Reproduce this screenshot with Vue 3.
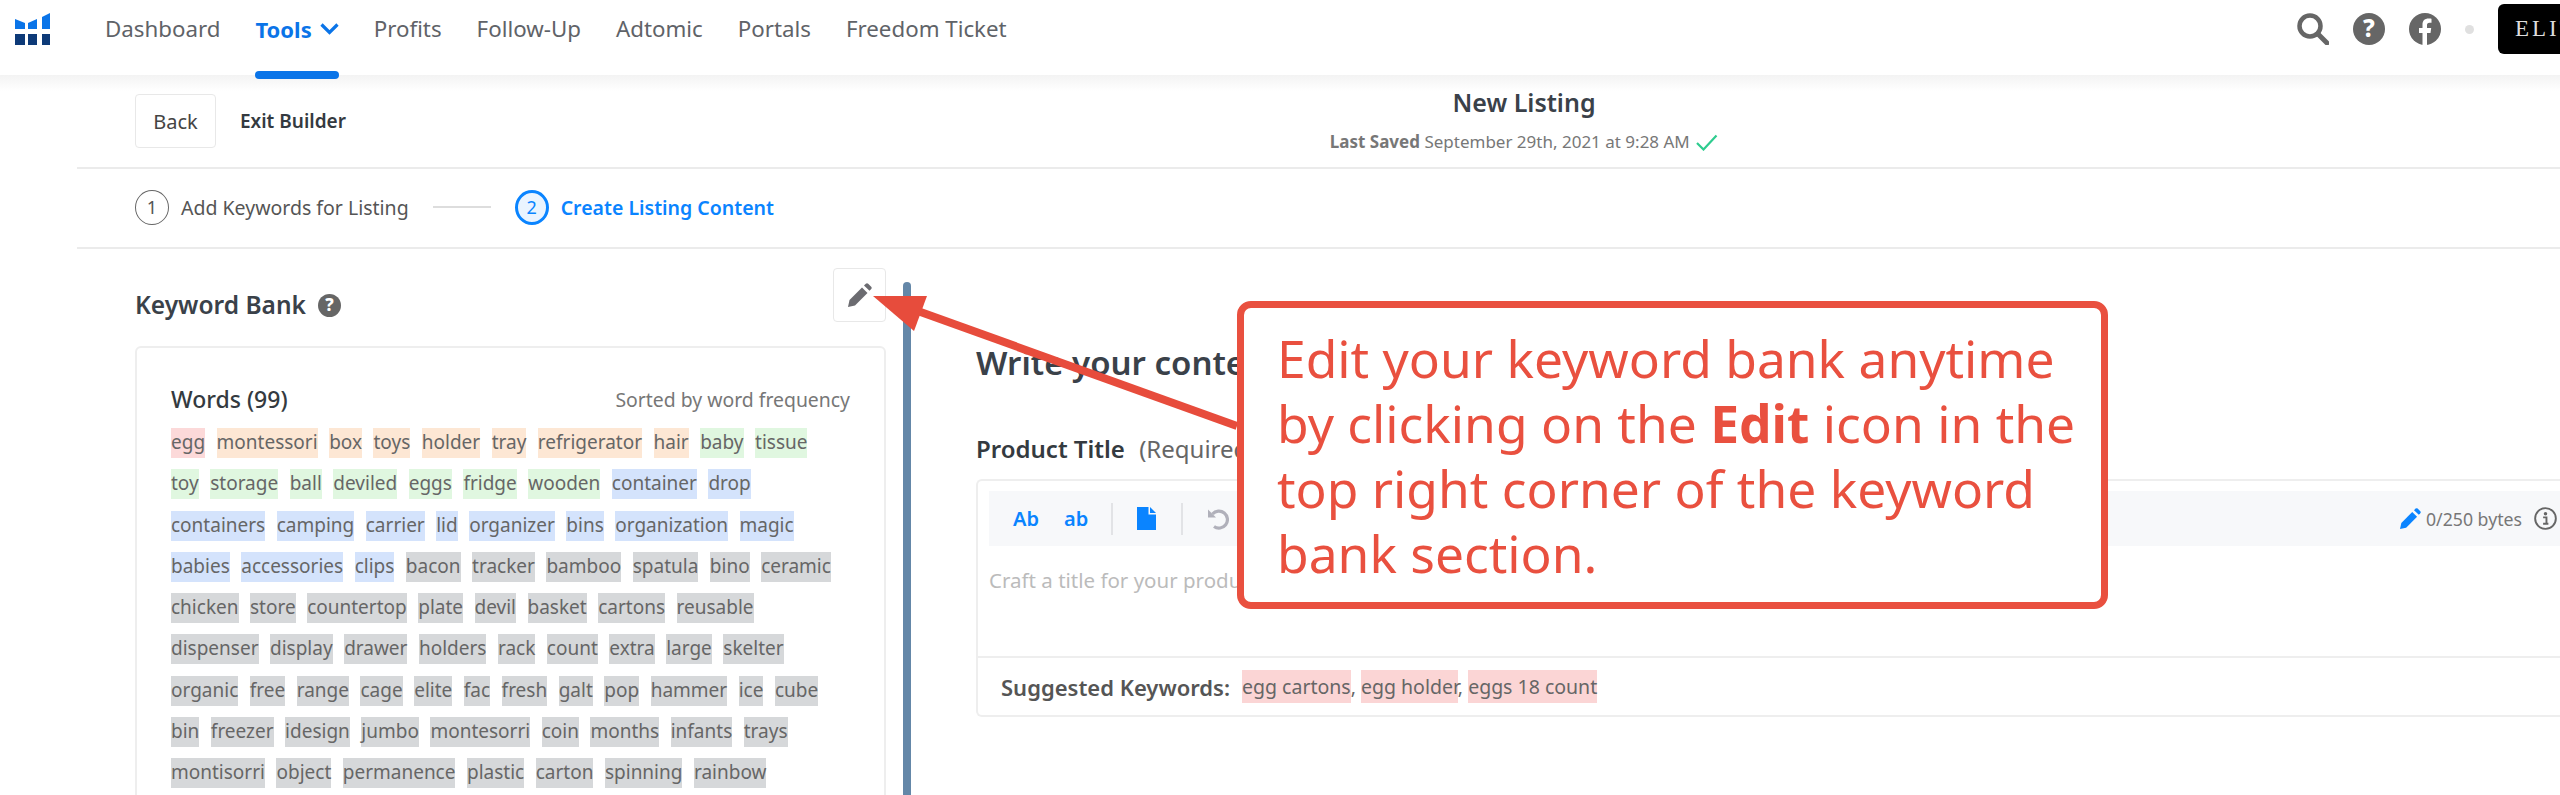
<script setup>
const navItems = ['Profits', 'Follow-Up', 'Adtomic', 'Portals', 'Freedom Ticket']
const rows = [
  [['egg','r'],['montessori','o'],['box','o'],['toys','o'],['holder','o'],['tray','o'],['refrigerator','o'],['hair','o'],['baby','g'],['tissue','g']],
  [['toy','g'],['storage','g'],['ball','g'],['deviled','g'],['eggs','g'],['fridge','g'],['wooden','g'],['container','b'],['drop','b']],
  [['containers','b'],['camping','b'],['carrier','b'],['lid','b'],['organizer','b'],['bins','b'],['organization','b'],['magic','b']],
  [['babies','b'],['accessories','b'],['clips','b'],['bacon','k'],['tracker','k'],['bamboo','k'],['spatula','k'],['bino','k'],['ceramic','k']],
  'chicken store countertop plate devil basket cartons reusable'.split(' ').map(w => [w,'k']),
  'dispenser display drawer holders rack count extra large skelter'.split(' ').map(w => [w,'k']),
  'organic free range cage elite fac fresh galt pop hammer ice cube'.split(' ').map(w => [w,'k']),
  'bin freezer idesign jumbo montesorri coin months infants trays'.split(' ').map(w => [w,'k']),
  'montisorri object permanence plastic carton spinning rainbow'.split(' ').map(w => [w,'k'])
]
</script>

<template>
  <div class="page">
    <header class="nav">
      <svg class="logo" width="35" height="32" viewBox="0 0 35 32">
        <path d="M0 6l10 4v6H0z" fill="#0a74e8"/><path d="M13 10l9-4v10h-9z" fill="#0a74e8"/><path d="M27 4l8-4v16h-8z" fill="#0a74e8"/>
        <rect y="21" width="10" height="11" fill="#0d3a78"/><rect x="13" y="21" width="9" height="11" fill="#0d3a78"/><rect x="27" y="21" width="8" height="11" fill="#0d3a78"/>
      </svg>
      <a class="nav-link">Dashboard</a>
      <a class="nav-link active">Tools
        <svg width="19" height="12" viewBox="0 0 19 12"><path d="M1.500 1.500l8 8 8-8" fill="none" stroke="#0a74e8" stroke-width="3.200"/></svg>
      </a>
      <a v-for="n in navItems" :key="n" class="nav-link">{{ n }}</a>
      <div class="nav-right">
        <svg width="32" height="32" viewBox="0 0 32 32"><circle cx="13" cy="13" r="10.500" fill="none" stroke="#666" stroke-width="4.500"/><path d="M21 21l9 9" stroke="#666" stroke-width="5" stroke-linecap="round"/></svg>
        <svg width="32" height="32" viewBox="0 0 32 32"><circle cx="16" cy="16" r="16" fill="#666"/><text x="16" y="24" text-anchor="middle" class="qm">?</text></svg>
        <svg width="32" height="32" viewBox="0 0 32 32"><circle cx="16" cy="16" r="16" fill="#666"/><path d="M13.500 32V20H10v-5h3.500v-3.500c0-4 2.400-6 6-6 1.600 0 3 .2 3 .2v4h-2c-2 0-2.500 1.200-2.500 2.400V15h4.200l-.7 5h-3.500v12z" fill="#fff"/></svg>
        <span class="dot"></span>
        <div class="elite">ELITE</div>
      </div>
    </header>

    <main class="content">
      <section class="head-row">
        <div class="head-left">
          <button class="back">Back</button>
          <span class="exit">Exit Builder</span>
        </div>
        <div class="head-center">
          <div class="title">New Listing</div>
          <div class="saved"><b>Last Saved</b> September 29th, 2021 at 9:28 AM
            <svg width="22" height="17" viewBox="0 0 22 17"><path d="M1 9l6.500 6.500L20.500 1.500" fill="none" stroke="#2ecc8f" stroke-width="2.200"/></svg>
          </div>
        </div>
      </section>

      <section class="steps">
        <span class="num">1</span>
        <span class="step">Add Keywords for Listing</span>
        <span class="connector"></span>
        <span class="num on">2</span>
        <span class="step on">Create Listing Content</span>
      </section>

      <section class="body">
        <aside class="bank">
          <div class="bank-head">
            <h2>Keyword Bank
              <svg width="23" height="23" viewBox="0 0 32 32"><circle cx="16" cy="16" r="16" fill="#666"/><text x="16" y="24" text-anchor="middle" class="qm">?</text></svg>
            </h2>
            <button class="edit">
              <svg width="24" height="24" viewBox="0 0 24 24"><path d="M0 24l1.500-7L14 4.500l5.500 5.500L7 22.500z" fill="#6b6b70"/><path d="M16 2.500l1.800-1.800q1.200-1 2.400 0l3 3q1 1.200 0 2.400L21.500 7.800z" fill="#6b6b70"/></svg>
            </button>
          </div>
          <div class="card">
            <div class="card-head"><strong>Words (99)</strong><span>Sorted by word frequency</span></div>
            <div v-for="(r, i) in rows" :key="i" class="row">
              <span v-for="w in r" :key="w[0]" class="chip" :class="w[1]">{{ w[0] }}</span>
            </div>
          </div>
        </aside>

        <div class="rail"></div>

        <div class="writer">
          <h1>Write your content</h1>
          <div class="label"><b>Product Title</b> <span>(Required)</span></div>
          <div class="editor">
            <div class="toolbar">
              <span class="tb first">Ab</span><span class="tb second">ab</span>
              <i class="sep"></i>
              <svg width="19" height="23" viewBox="0 0 19 23"><path d="M0 0h11.500v7.500H19V23H0z" fill="#0a84ff"/><path d="M13 0l6 6h-6z" fill="#0a84ff"/></svg>
              <i class="sep"></i>
              <svg width="22" height="22" viewBox="0 0 22 22"><path d="M5.500 6A8.500 8.500 0 1 1 7 18.500" fill="none" stroke="#b0b0ba" stroke-width="3.200"/><path d="M1 1.500v8h8z" fill="#b0b0ba"/></svg>
              <div class="bytes">
                <svg width="21" height="21" viewBox="0 0 24 24"><path d="M0 24l1.500-7L14 4.500l5.500 5.500L7 22.500z" fill="#0a84ff"/><path d="M16 2.500l1.800-1.800q1.200-1 2.400 0l3 3q1 1.200 0 2.400L21.500 7.800z" fill="#0a84ff"/></svg>
                <span>0/250 bytes</span>
                <svg width="23" height="23" viewBox="0 0 24 24"><circle cx="12" cy="12" r="10.800" fill="none" stroke="#666" stroke-width="2"/><circle cx="12" cy="7" r="1.800" fill="#666"/><path d="M9.500 10.800H13V17M9.500 17.500h5.500" fill="none" stroke="#666" stroke-width="2"/></svg>
              </div>
            </div>
            <div class="placeholder">Craft a title for your product</div>
            <div class="suggest">
              <b>Suggested Keywords:</b>
              <span class="sk"><mark>egg cartons</mark>, <mark>egg holder</mark>, <mark>eggs 18 count</mark></span>
            </div>
          </div>
        </div>
      </section>
    </main>

    <svg class="arrow" width="380" height="160" viewBox="0 0 380 160">
      <path d="M50 28L372 144" stroke="#e74c3c" stroke-width="8" fill="none"/>
      <path d="M8 14H62L49 49z" fill="#e74c3c"/>
    </svg>
    <div class="callout">Edit your keyword bank anytime by clicking on the <b>Edit</b> icon in the top right corner of the keyword bank section.</div>
  </div>
</template>

<style>
html, body { margin: 0; background: #fff; overflow: hidden; }
</style>

<style scoped>
.page { position: relative; width: 2560px; height: 795px; overflow: hidden; font-family: "Noto Sans", sans-serif; color: #343a40; background: #fff; }
.nav { height: 75px; display: flex; align-items: center; padding: 0 0 17px 15px; box-sizing: border-box; background: #fff; position: relative; z-index: 1; }
.nav::after { content: ""; position: absolute; left: 0; right: 0; top: 75px; height: 16px; background: linear-gradient(#f3f3f3, #fff); }
.logo { margin-right: 55px; }
.nav-link { font-size: 22.300px; line-height: 30px; color: #5f6368; margin-right: 35px; position: relative; white-space: nowrap; }
.nav-link.active { color: #0a74e8; font-weight: 700; font-size: 22px; display: inline-flex; align-items: center; gap: 8px; }
.nav-link.active::after { content: ""; position: absolute; left: 0; right: 0; top: 57px; height: 8px; border-radius: 4px; background: #0a74e8; z-index: 2; }
.nav-right { margin-left: auto; display: flex; align-items: center; gap: 24px; }
.qm { font: 800 24px "Noto Sans", sans-serif; fill: #fff; }
.dot { width: 9px; height: 9px; border-radius: 50%; background: #e0e0e0; }
.elite { width: 62px; height: 50px; box-sizing: border-box; background: #000; color: #ddd; border-radius: 6px 0 0 6px; font: 23px/50px "Liberation Serif", serif; letter-spacing: 3px; padding-left: 17px; overflow: hidden; white-space: nowrap; }
.content { margin-left: 77px; position: relative; }
.head-row { height: 94px; box-sizing: border-box; padding: 19px 0 0 58px; border-bottom: 2px solid #ebebeb; position: relative; display: flex; }
.head-left { display: flex; align-items: center; height: 54px; gap: 24px; }
.back { width: 81px; height: 54px; background: #fff; border: 1px solid #e8e8e8; border-radius: 4px; font: 20px "Noto Sans", sans-serif; color: #444; padding: 0; }
.exit { font-size: 19px; font-weight: 600; color: #343a40; }
.head-center { position: absolute; left: 1222px; top: 0; width: 450px; text-align: center; }
.title { font-size: 25px; font-weight: 600; margin-top: 9px; line-height: 36px; color: #3a4149; }
.saved { font-size: 17px; color: #777; margin-top: 10px; white-space: nowrap; }
.saved svg { vertical-align: -3px; margin-left: 2px; }
.steps { height: 80px; box-sizing: border-box; padding: 0 0 2px 58px; border-bottom: 2px solid #ebebeb; display: flex; align-items: center; font-size: 19.500px; }
.num { width: 34px; height: 35px; box-sizing: border-box; border: 1.500px solid #666; border-radius: 50%; display: flex; align-items: center; justify-content: center; font-size: 18px; color: #555; }
.num.on { border: 3px solid #0a84ff; background: #eaf4ff; color: #0a84ff; }
.step { margin-left: 12px; color: #555; }
.step.on { color: #0a84ff; font-weight: 600; }
.connector { width: 58px; height: 2px; background: #ddd; margin: 0 24px; }
.body { display: flex; }
.bank { width: 751px; margin-left: 58px; flex: none; }
.bank-head { height: 97px; display: flex; justify-content: space-between; align-items: flex-start; padding-top: 19px; box-sizing: border-box; }
h2 { font-size: 24.500px; font-weight: 600; margin: 20px 0 0; display: flex; align-items: center; gap: 12px; line-height: 34px; color: #3a4149; }
.edit { width: 53px; height: 54px; border: 1px solid #e8e8e8; border-radius: 4px; background: #fff; padding: 0; display: flex; align-items: center; justify-content: center; }
.card { border: 2px solid #eee; border-radius: 6px; padding: 36px 34px 0; height: 500px; box-sizing: border-box; }
.card-head { display: flex; justify-content: space-between; align-items: center; height: 30px; margin-bottom: 14px; }
.card-head strong { font-size: 23px; font-weight: 500; }
.card-head span { font-size: 19.400px; color: #777; }
.row { display: flex; gap: 11.500px; height: 41.300px; }
.chip { height: 30px; line-height: 29px; font-size: 19px; color: #666; white-space: nowrap; }
.r { background: #fcd9d9; } .o { background: #fde7d4; } .g { background: #e0f7e0; } .b { background: #d4e3fc; } .k { background: #d6d8da; }
.rail { width: 8px; height: 560px; background: #6487a8; margin: 33px 0 0 17px; border-radius: 4px; flex: none; }
.writer { margin-left: 65px; flex: 1; min-width: 0; }
h1 { font-size: 33px; font-weight: 600; margin: 92px 0 0; line-height: 44px; white-space: nowrap; color: #3a4149; }
.label { margin-top: 49px; font-size: 24px; line-height: 30px; }
.label b { font-weight: 600; }
.label span { color: #666; margin-left: 8px; }
.editor { border: 2px solid #eee; border-right: 0; border-radius: 6px 0 0 6px; margin-top: 15px; height: 238px; box-sizing: border-box; padding: 10px 0 0 11px; display: flex; flex-direction: column; }
.toolbar { height: 55px; background: #f7f8fa; display: flex; align-items: center; flex: none; }
.tb { color: #0a84ff; font-size: 20px; font-weight: 600; margin-right: 25px; }
.tb.first { margin-left: 24px; }
.tb.second { margin-right: 23px; }
.sep { width: 2px; height: 32px; background: #e2e3e6; margin-right: 24px; }
.toolbar > svg { margin-right: 25px; }
.bytes { margin-left: auto; display: flex; align-items: center; font-size: 17.700px; color: #777; gap: 5px; padding-right: 3px; }
.bytes span { margin-right: 7px; }
.placeholder { color: #bbb; font-size: 20.500px; line-height: 28px; padding-top: 20px; height: 110px; box-sizing: border-box; flex: none; }
.suggest { border-top: 2px solid #eee; margin-left: -11px; padding-left: 23px; display: flex; align-items: center; color: #555; flex: 1; }
.suggest b { font-weight: 600; font-size: 22px; margin-right: 12px; }
.sk { font-size: 19.500px; color: #666; }
mark { background: #fbd5d5; color: #666; padding: 3px 0; }
.arrow { position: absolute; left: 865px; top: 282px; }
.callout { position: absolute; left: 1237px; top: 301px; width: 871px; height: 308px; box-sizing: border-box; border: 7px solid #e9503f; border-radius: 14px; background: #fff; color: #e9503f; font-size: 51.500px; line-height: 65px; padding: 18px 10px 0 33px; }
.callout b { font-weight: 700; }
</style>
